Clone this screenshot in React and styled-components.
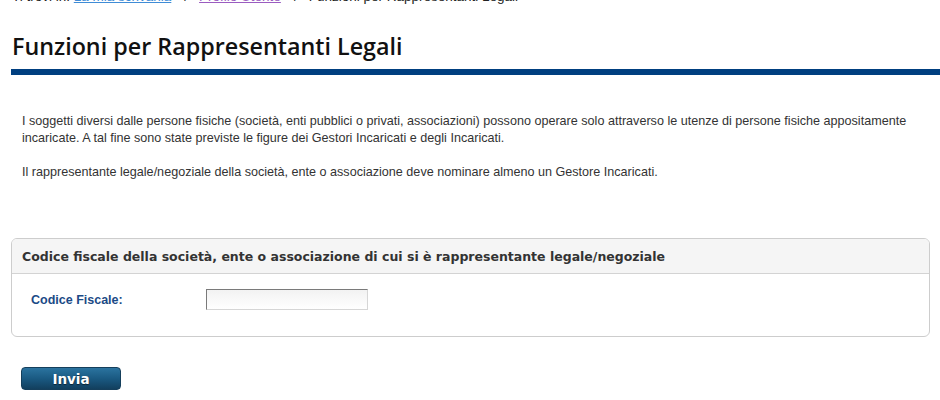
import React from 'react'
import styled, { createGlobalStyle } from 'styled-components'

const Global = createGlobalStyle`
  html, body { margin: 0; padding: 0; background: #fff; }
  body { font-family: "Liberation Sans", Arial, sans-serif; color: #333; }
`

const Page = styled.div`
  width: 940px;
  margin-top: -11px;
`

const Breadcrumb = styled.div`
  padding-left: 12px;
  font-size: 13.5px;
  line-height: 16px;
  color: #222;
  a {
    color: #3f8cd6;
    text-decoration: underline;
  }
  a.visited {
    color: #9a5cc0;
  }
`

const Sep = styled.span`
  margin: 0 11px 0 13px;
`

const Title = styled.h1`
  margin: 24px 0 0 11px;
  padding: 0 0 6px 1px;
  font-family: "Open Sans", "Noto Sans", sans-serif;
  font-weight: 600;
  font-size: 23.3px;
  line-height: 34px;
  color: #111;
  border-bottom: 6px solid #003f80;
`

const Intro = styled.div`
  padding: 38px 30px 0 22px;
  font-size: 12.6px;
  line-height: 17px;
  color: #333;
  p { margin: 0 0 17px; }
`

const Panel = styled.div`
  margin: 57px 10px 0 11px;
  border: 1px solid #cdcdcd;
  border-radius: 6px;
  overflow: hidden;
`

const PanelHead = styled.div`
  background: #f5f5f5;
  border-bottom: 1px solid #d3d3d3;
  padding: 0 10px;
  height: 34px;
  display: flex;
  align-items: center;
  font-family: "DejaVu Sans", Verdana, sans-serif;
  font-weight: bold;
  font-size: 12.5px;
  color: #333;
`

const PanelBody = styled.div`
  padding: 15px 19px 26px;
  display: flex;
  align-items: center;
`

const Label = styled.label`
  width: 175px;
  font-size: 12.5px;
  font-weight: bold;
  color: #1b4a86;
`

const Input = styled.input`
  box-sizing: border-box;
  width: 162px;
  height: 21px;
  border: 1px solid #d6d6d6;
  border-top-color: #7a7a7a;
  border-left-color: #7a7a7a;
  background: linear-gradient(#f2f2f2, #fff);
  padding: 0 4px;
  margin: 0;
`

const Actions = styled.div`
  padding: 30px 0 0 21px;
`

const Button = styled.button`
  width: 100px;
  height: 23px;
  border: 1px solid #153f5c;
  border-radius: 4px;
  background: linear-gradient(#2b739f, #1a5a82 50%, #123f5e);
  color: #fff;
  font-family: "DejaVu Sans", Verdana, sans-serif;
  font-weight: bold;
  font-size: 13.5px;
  text-shadow: 0 1px 1px #0a2436;
  cursor: pointer;
  padding: 0;
`

export default function App() {
  return (
    <Page>
      <Global />
      <Breadcrumb>
        Ti trovi in: <a href="#">La mia scrivania</a>
        <Sep>/</Sep>
        <a href="#" className="visited">Profilo Utente</a>
        <Sep>/</Sep>
        Funzioni per Rappresentanti Legali
      </Breadcrumb>
      <Title>Funzioni per Rappresentanti Legali</Title>
      <Intro>
        <p>
          I soggetti diversi dalle persone fisiche (società, enti pubblici o privati, associazioni) possono operare solo attraverso le utenze di persone fisiche appositamente incaricate. A tal fine sono state previste le figure dei Gestori Incaricati e degli Incaricati.
        </p>
        <p>
          Il rappresentante legale/negoziale della società, ente o associazione deve nominare almeno un Gestore Incaricati.
        </p>
      </Intro>
      <Panel>
        <PanelHead>
          Codice fiscale della società, ente o associazione di cui si è rappresentante legale/negoziale
        </PanelHead>
        <PanelBody>
          <Label htmlFor="cf">Codice Fiscale:</Label>
          <Input id="cf" type="text" />
        </PanelBody>
      </Panel>
      <Actions>
        <Button type="button">Invia</Button>
      </Actions>
    </Page>
  )
}
